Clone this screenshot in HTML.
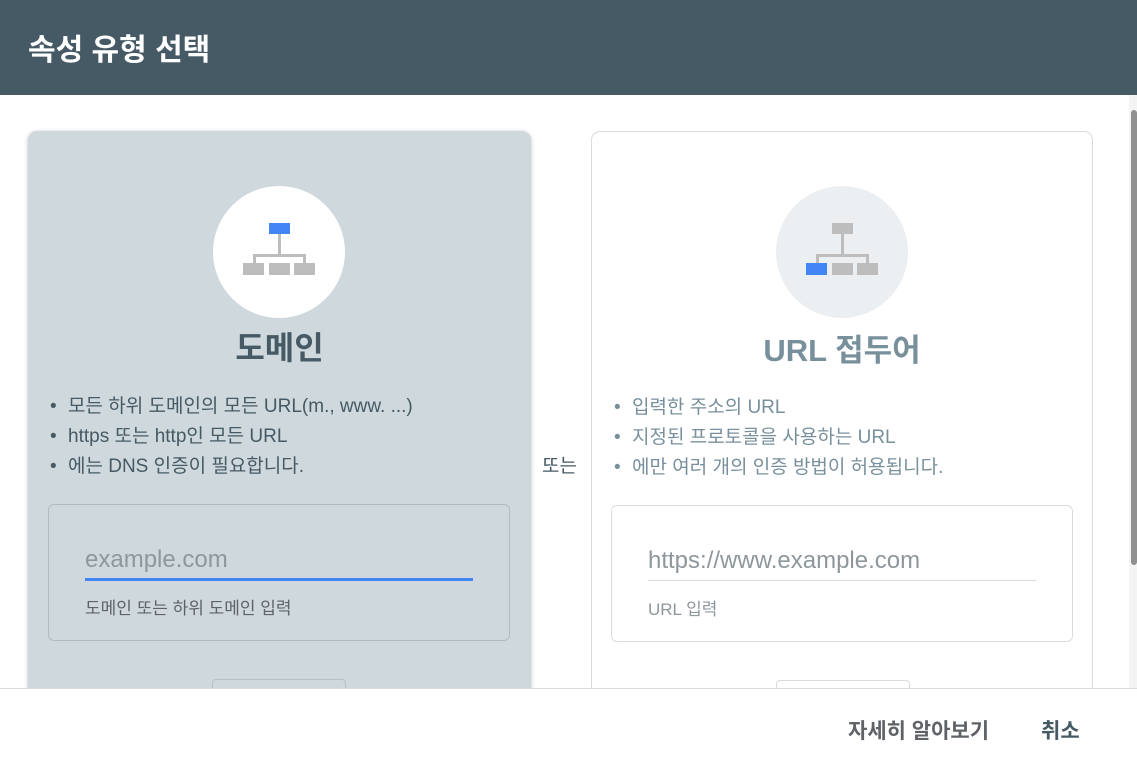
<!DOCTYPE html>
<html><head><meta charset="utf-8"><style>
*{box-sizing:border-box;margin:0;padding:0}
body{width:1137px;height:762px;overflow:hidden;background:#fff;font-family:"Liberation Sans","Noto Sans CJK KR",sans-serif;position:relative}
.hdr{position:absolute;left:0;top:0;width:1137px;height:95px;background:#465a65}
.hdr h1{position:absolute;left:28px;top:25px;color:#fff;font-size:30px;font-weight:bold}
.card{position:absolute;top:131px;width:503px;height:620px;border-radius:9px}
.c1{left:28px;background:#cfd8dc;box-shadow:0 1px 4px rgba(0,0,0,.25)}
.c2{left:591px;width:502px;border:1px solid #dadce0;background:#fff}
.circ{position:absolute;left:185px;top:55px;width:132px;height:132px;border-radius:50%}
.ttl{position:absolute;left:0;width:100%;top:192px;text-align:center;font-size:32px;font-weight:bold}
ul{position:absolute;left:24px;top:261px;list-style:none;font-size:19px;line-height:30px}
ul li:before{content:"•";display:inline-block;width:18px;margin-left:-2px;font-size:19px}
.inp{position:absolute;left:20px;top:373px;width:462px;height:137px;border-radius:6px}
.ph{position:absolute;left:36px;top:41px;font-size:24px;color:#8e979c}
.ul{position:absolute;left:36px;width:388px}
.hl{position:absolute;left:36px;top:89px;font-size:17px}
.btn{position:absolute;left:184px;top:548px;width:134px;height:40px;border:1px solid #b8c0c4;border-radius:4px}
.ft{position:absolute;left:0;top:688px;width:1137px;height:74px;background:#fff;border-top:1px solid #dadce0}
.ft span{position:absolute;top:26px;font-size:21px;color:#5f6368;font-weight:bold}
</style></head><body>
<div class="hdr"><h1>속성 유형 선택</h1></div>
<div class="card c1">
 <div class="circ" style="background:#fff">
  <svg width="132" height="132" viewBox="0 0 132 132">
   <rect x="56" y="37" width="21" height="11" fill="#4285f4"/>
   <rect x="65" y="48" width="3" height="22" fill="#bdbdbd"/>
   <rect x="40" y="68" width="53" height="3" fill="#bdbdbd"/>
   <rect x="40" y="68" width="3" height="10" fill="#bdbdbd"/>
   <rect x="90" y="68" width="3" height="10" fill="#bdbdbd"/>
   <rect x="30" y="77" width="21" height="12" fill="#bdbdbd"/>
   <rect x="56" y="77" width="21" height="12" fill="#bdbdbd"/>
   <rect x="81" y="77" width="21" height="12" fill="#bdbdbd"/>
  </svg>
 </div>
 <div class="ttl" style="color:#455a64">도메인</div>
 <ul style="color:#455a64"><li>모든 하위 도메인의 모든 URL(m., www. ...)</li><li>https 또는 http인 모든 URL</li><li>에는 DNS 인증이 필요합니다.</li></ul>
 <div class="inp" style="border:1px solid #b3bbbf">
  <div class="ph">example.com</div>
  <div class="ul" style="top:73px;height:3px;background:#4285f4"></div>
  <div class="hl" style="color:#5f6368">도메인 또는 하위 도메인 입력</div>
 </div>
 <div class="btn"></div>
</div>
<div style="position:absolute;left:542px;top:451px;font-size:19px;color:#455a64">또는</div>
<div class="card c2">
 <div class="circ" style="background:#eceff1;left:184px;top:54px">
  <svg width="132" height="132" viewBox="0 0 132 132">
   <rect x="56" y="37" width="21" height="11" fill="#bdbdbd"/>
   <rect x="65" y="48" width="3" height="22" fill="#bdbdbd"/>
   <rect x="40" y="68" width="53" height="3" fill="#bdbdbd"/>
   <rect x="40" y="68" width="3" height="10" fill="#bdbdbd"/>
   <rect x="90" y="68" width="3" height="10" fill="#bdbdbd"/>
   <rect x="30" y="77" width="21" height="12" fill="#4285f4"/>
   <rect x="56" y="77" width="21" height="12" fill="#bdbdbd"/>
   <rect x="81" y="77" width="21" height="12" fill="#bdbdbd"/>
  </svg>
 </div>
 <div class="ttl" style="color:#78909c;font-size:31px;top:193px">URL 접두어</div>
 <ul style="color:#78909c"><li>입력한 주소의 URL</li><li>지정된 프로토콜을 사용하는 URL</li><li>에만 여러 개의 인증 방법이 허용됩니다.</li></ul>
 <div class="inp" style="left:19px;border:1px solid #dadce0">
  <div class="ph">https://www.example.com</div>
  <div class="ul" style="top:74px;height:1px;background:#dadce0"></div>
  <div class="hl" style="color:#8e979c">URL 입력</div>
 </div>
 <div class="btn" style="border-color:#dadce0"></div>
</div>
<div style="position:absolute;left:1129px;top:95px;width:8px;height:593px;background:#f4f4f4"></div>
<div style="position:absolute;left:1131px;top:110px;width:6px;height:455px;background:#909090;border-radius:3px"></div>
<div class="ft"><span style="left:848px">자세히 알아보기</span><span style="left:1041px;color:#455a64">취소</span></div>
</body></html>
